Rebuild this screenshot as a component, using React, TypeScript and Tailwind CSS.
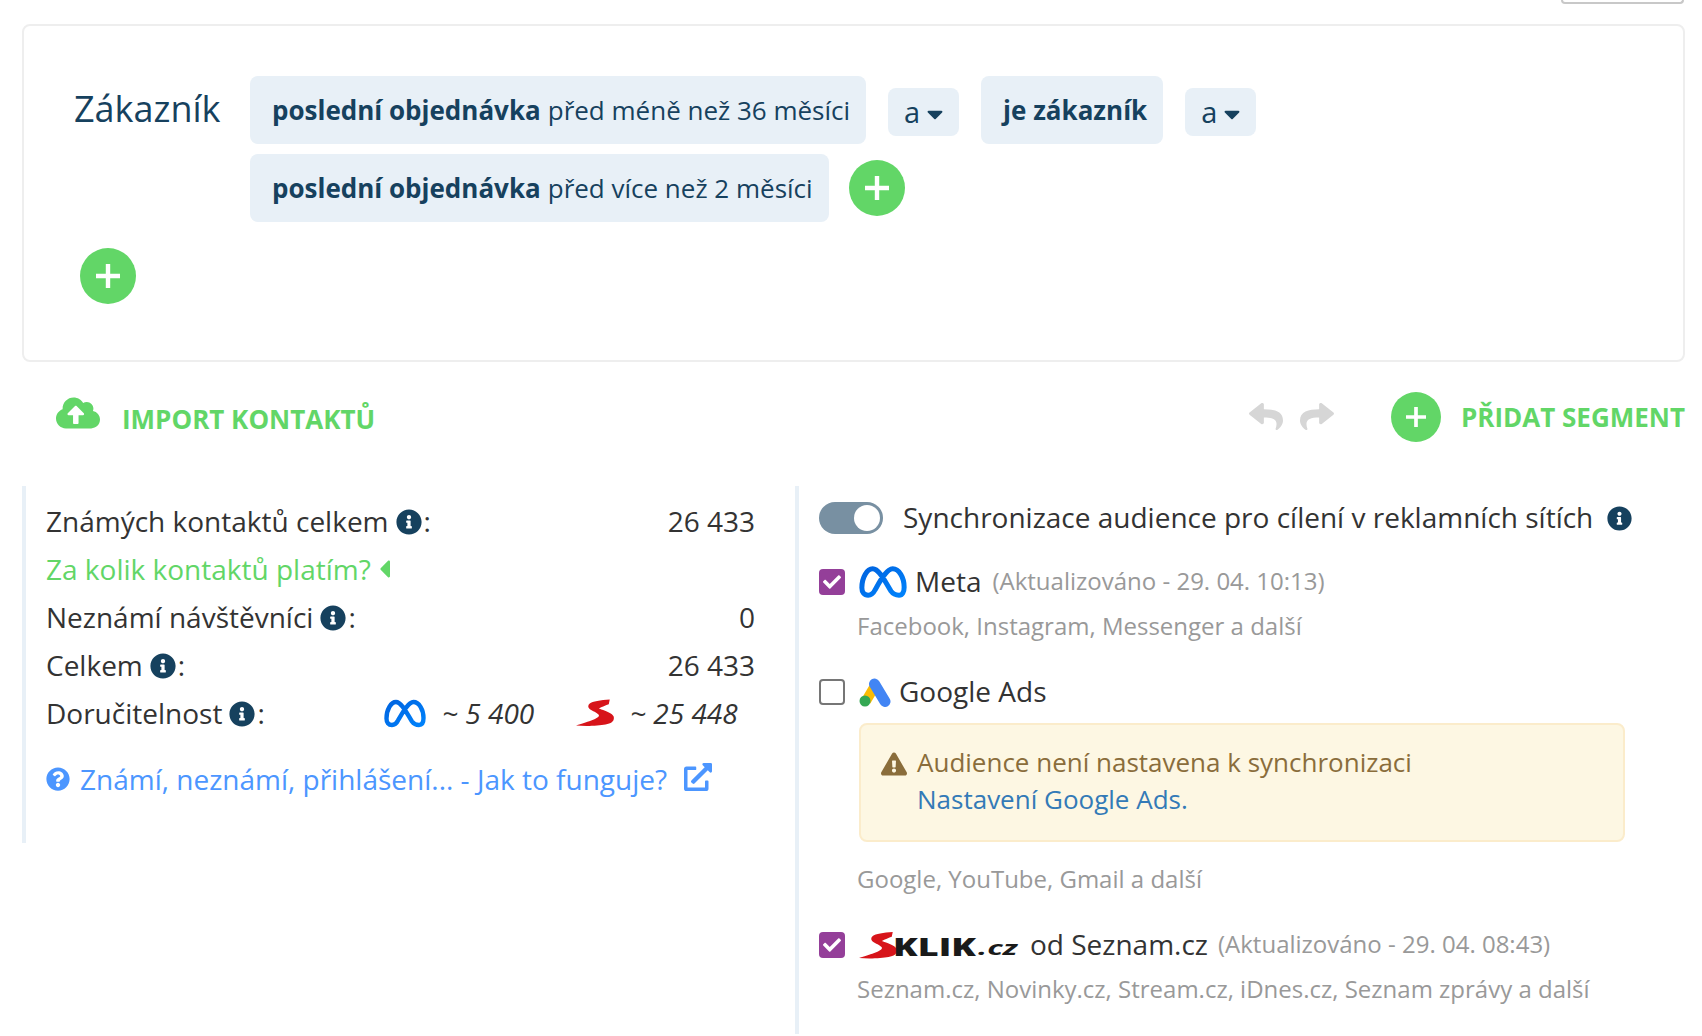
import React from "react";
import {
  FaCaretDown,
  FaCaretLeft,
  FaCheck,
  FaCloudUploadAlt,
  FaExclamationTriangle,
  FaExternalLinkAlt,
  FaInfoCircle,
  FaQuestionCircle,
  FaReply,
  FaShare,
} from "react-icons/fa";

const MetaLogo = ({ className }: { className: string }) => (
  <svg viewBox="0 0 42 28" className={className} fill="none">
    <defs>
      <linearGradient id="metaGrad" x1="0" y1="0" x2="1" y2="1">
        <stop offset="0" stopColor="#0064e0" />
        <stop offset="1" stopColor="#0082fb" />
      </linearGradient>
    </defs>
    <path
      d="M2.5 19C2.5 10 7 2.5 12 2.5C18 2.5 24 16 28 22C30.5 25.5 33 25.5 35 25.5C38 25.5 39.5 22.5 39.5 18.5C39.5 10 35 2.5 29.5 2.5C24 2.5 18 14 14 21C12 25 10 25.5 8 25.5C4.5 25.5 2.5 23 2.5 19Z"
      stroke="url(#metaGrad)"
      strokeWidth="4.4"
      strokeLinejoin="round"
    />
  </svg>
);

const SklikMark = ({ className }: { className: string }) => (
  <svg viewBox="0 0 116 82" className={className}>
    <path
      d="M103 0C75 2 50 6 42 12C35 18 36 26 45 31C55 37 68 42 70 48C71 56 50 62 35 68C20 73 8 77 0 79C30 82 70 80 90 76C110 72 118 64 115 52C112 42 90 34 70 27C78 22 92 17 100 14Z"
      fill="#d7141a"
    />
  </svg>
);

const GoogleAdsLogo = () => (
  <svg viewBox="0 0 32 29" className="w-[32px] h-[29px] shrink-0" fill="none">
    <path d="M7 23L17 6" stroke="#fbbc04" strokeWidth="10" />
    <path d="M15.5 6L26 23.5" stroke="#4285f4" strokeWidth="11" strokeLinecap="round" />
    <circle cx="6" cy="23" r="5.5" fill="#34a853" />
  </svg>
);

const PlusIcon = ({ className }: { className: string }) => (
  <svg viewBox="0 0 24 24" className={className}>
    <path d="M12 0V24M0 12H24" stroke="white" strokeWidth="4.4" fill="none" />
  </svg>
);

const PlusButton = ({ size, icon }: { size: string; icon: string }) => (
  <div className={`${size} rounded-full bg-[#62d667] flex items-center justify-center shrink-0`}>
    <PlusIcon className={icon} />
  </div>
);

const Chip = ({ bold, rest }: { bold: string; rest?: string }) => (
  <div className="h-[68px] flex items-center pl-[22px] pr-[16px] bg-[#e8f0f7] rounded-[8px] text-[26px] text-[#16415e] whitespace-nowrap">
    <span className="font-bold">{bold}</span>
    {rest && <span className="ml-[7px]">{rest}</span>}
  </div>
);

const AndChip = () => (
  <div className="mt-[12px] w-[71px] h-[48px] flex items-center justify-center bg-[#e8f0f7] rounded-[8px] text-[29px] text-[#16415e]">
    a
    <FaCaretDown className="w-[16px] h-[26px] ml-[7px] mt-[4px]" />
  </div>
);

const Info = () => <FaInfoCircle className="inline-block size-[26px] ml-[7px] mr-[2px] text-[#16415e] align-[-3px]" />;

const Row = ({ label, value }: { label: string; value: string }) => (
  <div className="flex justify-between h-[48px] items-center">
    <span>
      {label}
      <Info />:
    </span>
    <span>{value}</span>
  </div>
);

const CheckBox = ({ checked }: { checked: boolean }) =>
  checked ? (
    <div className="size-[26px] rounded-[4px] bg-[#943f99] flex items-center justify-center text-white shrink-0">
      <FaCheck className="size-[18px]" />
    </div>
  ) : (
    <div className="size-[26px] rounded-[4px] border-2 border-[#767676] bg-white shrink-0" />
  );

const App = () => {
  return (
    <div className="w-[1702px] h-[1036px] overflow-hidden bg-white font-['Open_Sans',sans-serif] text-[#333]">
      {/* button cut off on top */}
      <div className="h-[24px] flex justify-end pr-[18px]">
        <div className="w-[123px] h-[4px] border-2 border-t-0 border-[#c8c8c8] rounded-b-[4px]" />
      </div>

      {/* segment card */}
      <div className="ml-[22px] mr-[17px] h-[338px] border-2 border-[#eeeeee] rounded-[8px] pt-[50px] pl-[49px]">
        <div className="flex">
          <div className="w-[177px] shrink-0 pt-[9px] pl-[1px] text-[36px] leading-[48px] text-[#16415e]">Zákazník</div>
          <div className="flex flex-col gap-[10px]">
            <div className="flex gap-[22px]">
              <Chip bold="poslední objednávka" rest="před méně než 36 měsíci" />
              <AndChip />
              <Chip bold="je zákazník" />
              <AndChip />
            </div>
            <div className="flex items-center gap-[20px]">
              <Chip bold="poslední objednávka" rest="před více než 2 měsíci" />
              <PlusButton size="size-[56px]" icon="size-[24px]" />
            </div>
          </div>
        </div>
        <div className="mt-[26px] ml-[7px]">
          <PlusButton size="size-[56px]" icon="size-[24px]" />
        </div>
      </div>

      {/* actions */}
      <div className="ml-[23px] mr-[17px] mt-[30px] h-[50px] flex items-center justify-between">
        <div className="flex items-center pl-[33px] text-[#62d667] font-bold text-[26px]">
          <FaCloudUploadAlt className="w-[44px] h-[44px] -mt-[8px]" />
          <span className="ml-[22px] mt-[4px]">IMPORT KONTAKTŮ</span>
        </div>
        <div className="flex items-center">
          <FaReply preserveAspectRatio="none" className="w-[34px] h-[31px] text-[#d6d6d6] mr-[17px] -mt-[2px]" />
          <FaShare preserveAspectRatio="none" className="w-[34px] h-[31px] text-[#d6d6d6] mr-[57px] -mt-[2px]" />
          <PlusButton size="size-[50px]" icon="size-[20px]" />
          <span className="ml-[20px] text-[#62d667] font-bold text-[26px] whitespace-nowrap">PŘIDAT SEGMENT</span>
        </div>
      </div>

      {/* bottom columns */}
      <div className="mt-[44px] flex items-start">
        <div className="ml-[22px] w-[773px] h-[357px] border-l-4 border-[#e8f0f7] pl-[20px] pr-[40px] pt-[11px] text-[28px]">
          <Row label="Známých kontaktů celkem" value="26 433" />
          <div className="h-[48px] flex items-center text-[#62d667]">
            Za kolik kontaktů platím?
            <FaCaretLeft className="w-[11px] h-[30px] ml-[8px]" />
          </div>
          <Row label="Neznámí návštěvníci" value="0" />
          <Row label="Celkem" value="26 433" />
          <div className="h-[48px] flex items-center">
            <span className="w-[338px] shrink-0">
              Doručitelnost
              <Info />:
            </span>
            <MetaLogo className="w-[42px] h-[29px] shrink-0" />
            <span className="ml-[16px] w-[134px] italic">~ 5 400</span>
            <SklikMark className="w-[38px] h-[28px] shrink-0" />
            <span className="ml-[16px] italic">~ 25 448</span>
          </div>
          <div className="mt-[21px] flex items-center text-[#4c96ff]">
            <FaQuestionCircle className="size-[24px] shrink-0" />
            <span className="ml-[10px]">Známí, neznámí, přihlášení... - Jak to funguje?</span>
            <FaExternalLinkAlt className="size-[28px] ml-[17px] -mt-[4px]" />
          </div>
        </div>

        <div className="h-[548px] border-l-4 border-[#e8f0f7] pl-[20px] pt-[16px] text-[28px] flex-1">
          <div className="flex items-center h-[32px]">
            <div className="w-[64px] h-[32px] rounded-full bg-[#7890a2] flex items-center justify-end pr-[3px] shrink-0">
              <div className="size-[26px] rounded-full bg-white" />
            </div>
            <span className="ml-[20px] -mt-[2px] whitespace-nowrap">Synchronizace audience pro cílení v reklamních sítích</span>
            <FaInfoCircle className="size-[25px] ml-[14px] text-[#16415e]" />
          </div>

          <div className="flex items-center mt-[32px] h-[32px]">
            <CheckBox checked />
            <MetaLogo className="ml-[14px] w-[48px] h-[32px] shrink-0" />
            <span className="ml-[8px] -mt-[2px]">Meta</span>
            <span className="ml-[11px] -mt-[2px] text-[24px] text-[#999]">(Aktualizováno - 29. 04. 10:13)</span>
          </div>
          <div className="ml-[38px] mt-[12px] text-[24px] leading-[32px] text-[#999]">Facebook, Instagram, Messenger a další</div>

          <div className="flex items-center mt-[34px] h-[32px]">
            <CheckBox checked={false} />
            <div className="ml-[14px]">
              <GoogleAdsLogo />
            </div>
            <span className="ml-[8px] -mt-[2px]">Google Ads</span>
          </div>

          <div className="ml-[40px] mt-[15px] w-[766px] h-[119px] bg-[#fdf7e3] border-2 border-[#fbeccb] rounded-[8px] pl-[20px] pt-[19px] flex">
            <FaExclamationTriangle className="w-[26px] h-[24px] mt-[8px] text-[#8a6d3b] shrink-0" />
            <div className="ml-[10px] text-[26px] leading-[37px] text-[#8a6d3b]">
              Audience není nastavena k synchronizaci
              <div className="text-[#337ab7]">Nastavení Google Ads.</div>
            </div>
          </div>

          <div className="ml-[38px] mt-[21px] text-[24px] leading-[32px] text-[#999]">Google, YouTube, Gmail a další</div>

          <div className="flex items-center mt-[34px] h-[32px]">
            <CheckBox checked />
            <div className="ml-[14px] w-[162px] h-[28px] flex items-end shrink-0 text-[#1a1a1a]">
              <SklikMark className="w-[38px] h-[27px] shrink-0" />
              <span className="-ml-[4px] font-black text-[24px] leading-[24px] inline-block w-[85px] origin-left scale-x-[1.5]">KLIK</span>
              <span className="font-bold italic text-[19px] leading-[22px] inline-block w-[43px] origin-left scale-x-[1.7]">.cz</span>
            </div>
            <span className="ml-[9px] -mt-[2px] whitespace-nowrap">od Seznam.cz</span>
            <span className="ml-[10px] -mt-[2px] text-[24px] text-[#999] whitespace-nowrap">(Aktualizováno - 29. 04. 08:43)</span>
          </div>
          <div className="ml-[38px] mt-[12px] text-[24px] leading-[32px] text-[#999]">Seznam.cz, Novinky.cz, Stream.cz, iDnes.cz, Seznam zprávy a další</div>
        </div>
      </div>
    </div>
  );
};

export default App;
